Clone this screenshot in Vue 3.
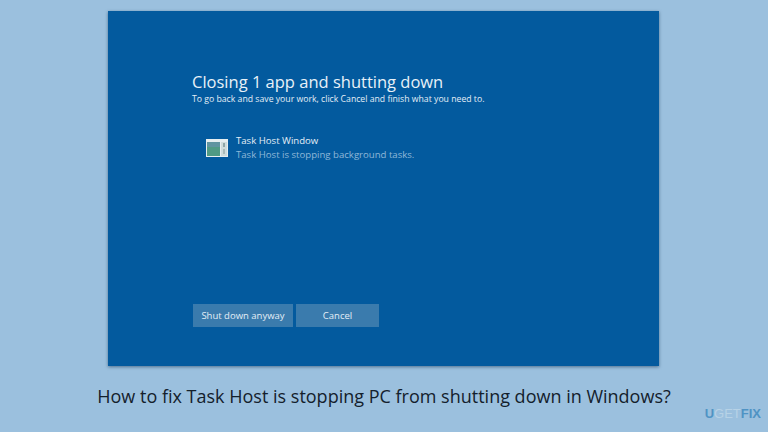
<template>
  <div class="page">
    <section class="screen">
      <h1 class="title">Closing 1 app and shutting down</h1>
      <p class="subtitle">To go back and save your work, click Cancel and finish what you need to.</p>

      <div class="app-row">
        <svg class="app-icon" width="22" height="18" viewBox="0 0 22 18">
          <rect width="22" height="18" fill="#e6eef0" />
          <rect x="1" y="3" width="13" height="14" fill="#4f9a84" />
          <rect x="1" y="3" width="13" height="5" fill="#5f94a0" />
          <rect x="15" y="3" width="6" height="14" fill="#cfdcdc" />
          <rect x="17" y="4" width="2" height="4" fill="#8fa6a8" />
          <rect x="17" y="10" width="2" height="5" fill="#a9baba" />
        </svg>
        <div class="app-text">
          <div class="app-name">Task Host Window</div>
          <div class="app-status">Task Host is stopping background tasks.</div>
        </div>
      </div>

      <div class="actions">
        <button class="btn btn-wide">Shut down anyway</button>
        <button class="btn btn-cancel">Cancel</button>
      </div>
    </section>

    <p class="caption">How to fix Task Host is stopping PC from shutting down in Windows?</p>
    <div class="logo"><span>U</span><span class="logo-mid">GET</span><span>FIX</span></div>
  </div>
</template>

<script setup>
</script>

<style>
body {
  margin: 0;
  background: #9bc0de;
}
</style>

<style scoped>
.page {
  position: relative;
  width: 768px;
  height: 432px;
  overflow: hidden;
  background: #9bc0de;
  display: flex;
  flex-direction: column;
  align-items: center;
  padding-top: 11px;
  box-sizing: border-box;
  font-family: "Open Sans", "Noto Sans", sans-serif;
}

.screen {
  width: 551px;
  height: 355px;
  margin-left: -1px;
  flex-shrink: 0;
  background: #035a9e;
  box-shadow: 0 1px 3px rgba(20, 50, 80, 0.55);
  box-sizing: border-box;
  padding: 60px 0 39px 84px;
  display: flex;
  flex-direction: column;
  color: #fff;
}

.title {
  margin: 0;
  font-size: 16.5px;
  line-height: 22px;
  font-weight: 400;
  color: #e8f1f8;
}

.subtitle {
  margin: 0;
  font-size: 8.7px;
  line-height: 13px;
  color: #e4eef6;
}

.app-row {
  display: flex;
  align-items: center;
  gap: 8px;
  margin: 28px 0 0 14px;
}

.app-text {
  font-size: 9.6px;
  line-height: 14px;
}

.app-name {
  color: #e4eef6;
}

.app-status {
  color: #8fb8d8;
}

.actions {
  margin-top: auto;
  display: flex;
  gap: 3px;
  margin-left: 1px;
}

.btn {
  height: 23px;
  padding: 0;
  border: 0;
  background: #3a7bad;
  color: #e4eef6;
  font-family: inherit;
  font-size: 9.5px;
}

.btn-wide {
  width: 100px;
}

.btn-cancel {
  width: 83px;
}

.caption {
  margin: 17px 0 0;
  font-size: 18px;
  line-height: 26px;
  color: #14202c;
  white-space: nowrap;
}

.logo {
  position: absolute;
  right: 7px;
  bottom: 10px;
  font-size: 13px;
  line-height: 16px;
  font-weight: 700;
  color: #4f93c4;
  font-family: "Liberation Sans", sans-serif;
}

.logo-mid {
  color: #b7d2e6;
  font-weight: 400;
}
</style>
